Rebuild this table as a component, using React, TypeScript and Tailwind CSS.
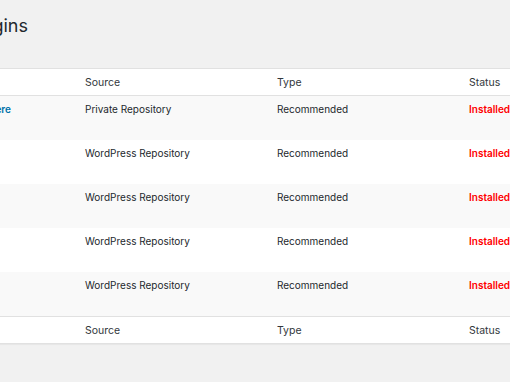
import React from 'react';

const rows = [
  { name: 'Theme Core Click here', link: true, source: 'Private Repository' },
  { name: '', link: false, source: 'WordPress Repository' },
  { name: '', link: false, source: 'WordPress Repository' },
  { name: '', link: false, source: 'WordPress Repository' },
  { name: '', link: false, source: 'WordPress Repository' },
];

const HeadRow = () => (
  <div className="grid grid-cols-[85px_192px_192px_1fr] h-[26px] pt-[1px] items-center bg-white text-[10.5px] text-[#32373c]">
    <div />
    <div>Source</div>
    <div>Type</div>
    <div>Status</div>
  </div>
);

export default function App() {
  return (
    <div className="w-[510px] h-[382px] overflow-hidden bg-[#f1f1f1] font-['Inter',sans-serif]">
      <div className="pt-[14px] h-[68px]">
        <div className="w-[28px] flex justify-end whitespace-nowrap text-[18px] leading-[24px] text-[#23282d]">
          Install Plugins
        </div>
      </div>

      <div className="border-y border-[#e1e1e1] shadow-[0_1px_1px_rgba(0,0,0,0.04)]">
        <HeadRow />
        <div className="border-t border-[#e1e1e1]">
          {rows.map((r, i) => (
            <div
              key={i}
              className={`grid grid-cols-[85px_192px_192px_1fr] h-[44px] pt-[6px] text-[10px] leading-[15px] text-[#23282d] ${
                i % 2 === 0 ? 'bg-[#f9f9f9]' : 'bg-white'
              }`}
            >
              <div>
                {r.link && (
                  <div className="w-[11px] flex justify-end whitespace-nowrap font-semibold text-[#0073aa]">
                    {r.name}
                  </div>
                )}
              </div>
              <div>{r.source}</div>
              <div>Recommended</div>
              <div className="font-semibold text-[#ff0000] whitespace-nowrap">Installed</div>
            </div>
          ))}
        </div>
        <div className="border-t border-[#e1e1e1]">
          <HeadRow />
        </div>
      </div>
    </div>
  );
}
